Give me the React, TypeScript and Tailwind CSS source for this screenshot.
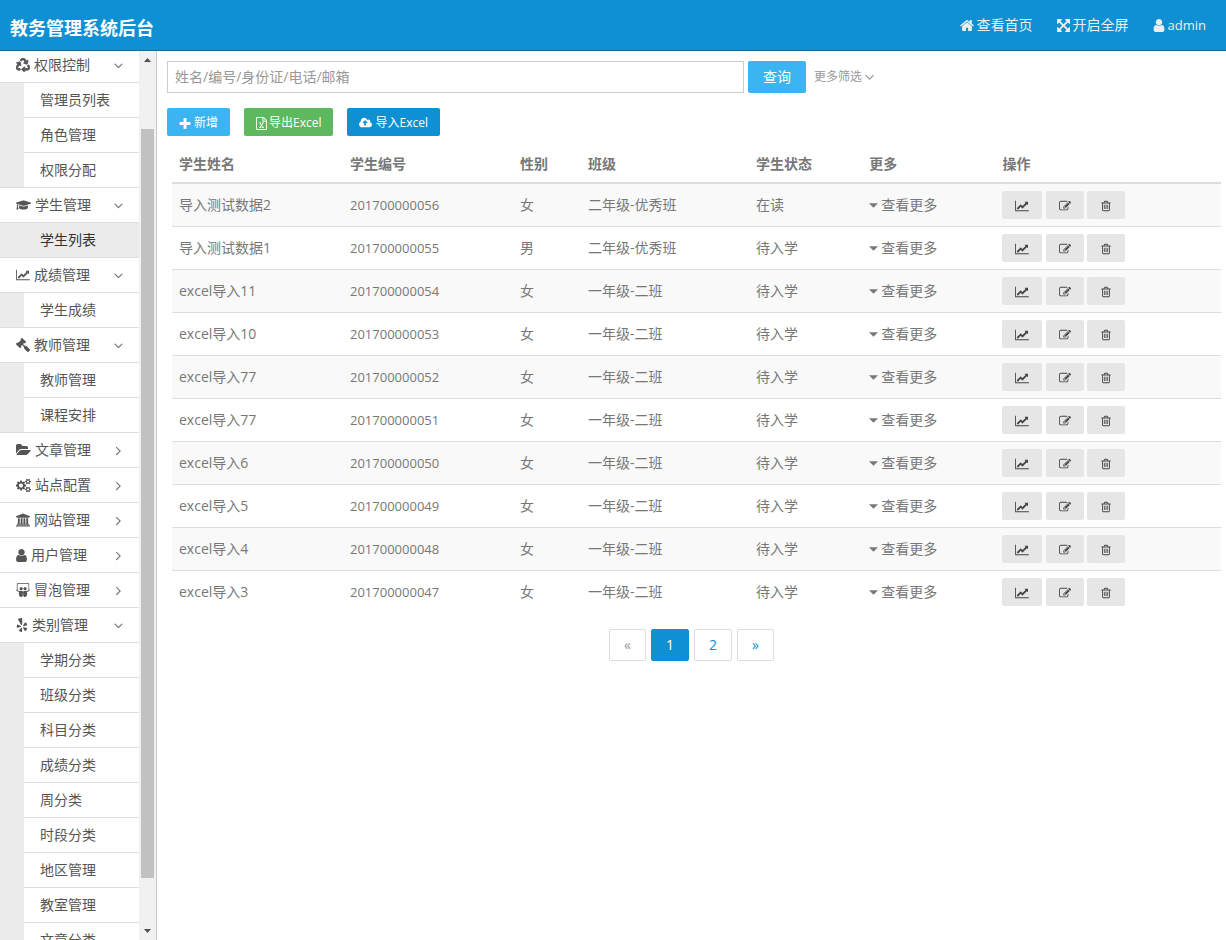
import { useState, type ReactNode } from "react";
import { FaGavel, FaGraduationCap, FaRecycle, FaSlideshare, FaYelp } from "react-icons/fa";

type GlyphProps = { box: string; className: string; d: string };

function Glyph({ box, className, d }: GlyphProps) {
  return (
    <svg viewBox={box} className={`shrink-0 fill-current ${className}`} aria-hidden="true">
      <path d={d} />
    </svg>
  );
}

const CHART =
  "M2048 1536v128h-2048v-1536h128v1408h1920zM1920 288v435q0 21-19.5 29.5t-35.5-7.5l-121-121-633 633q-10 10-23 10t-23-10l-233-233-416 416-192-192 585-585q10-10 23-10t23 10l233 233 464-464-121-121q-16-16-7.5-35.5t29.5-19.5h435q14 0 23 9t9 23z";
const EDIT =
  "M888 1184l116-116-152-152-116 116v56h96v96h56zm440-720q-16-16-33 1l-350 350q-17 17-1 33t33-1l350-350q17-17 1-33zm80 594v190q0 119-84.5 203.5t-203.5 84.5h-832q-119 0-203.5-84.5t-84.5-203.5v-832q0-119 84.5-203.5t203.5-84.5h832q63 0 117 25 15 7 18 23 3 17-9 29l-49 49q-14 14-32 8-23-6-45-6h-832q-66 0-113 47t-47 113v832q0 66 47 113t113 47h832q66 0 113-47t47-113v-126q0-13 9-22l64-64q15-15 35-7t20 29zm-96-738l288 288-672 672h-288v-288zm444 132l-92 92-288-288 92-92q28-28 68-28t68 28l152 152q28 28 28 68t-28 68z";
const TRASH =
  "M704 736v576q0 14-9 23t-23 9h-64q-14 0-23-9t-9-23v-576q0-14 9-23t23-9h64q14 0 23 9t9 23zm256 0v576q0 14-9 23t-23 9h-64q-14 0-23-9t-9-23v-576q0-14 9-23t23-9h64q14 0 23 9t9 23zm256 0v576q0 14-9 23t-23 9h-64q-14 0-23-9t-9-23v-576q0-14 9-23t23-9h64q14 0 23 9t9 23zm128 724v-948h-896v948q0 22 7 40.5t14.5 27 10.5 8.5h832q3 0 10.5-8.5t14.5-27 7-40.5zm-672-1076h448l-48-117q-7-9-17-11h-317q-10 2-17 11zm928 32v64q0 14-9 23t-23 9h-96v948q0 83-47 143.5t-113 60.5h-832q-66 0-113-58.5t-47-141.5v-952h-96q-14 0-23-9t-9-23v-64q0-14 9-23t23-9h309l70-167q15-37 54-63t79-26h320q40 0 79 26t54 63l70 167h309q14 0 23 9t9 23z";
const HOME =
  "M1472 992v480q0 26-19 45t-45 19h-384v-384h-256v384h-384q-26 0-45-19t-19-45v-480q0-1 .5-3t.5-3l575-474 575 474q1 2 1 6zm223-69l-62 74q-8 9-21 11h-3q-13 0-21-7l-692-577-692 577q-12 8-24 7-13-2-21-11l-62-74q-8-10-7-23.5t11-21.5l719-599q32-26 76-26t76 26l244 204v-195q0-14 9-23t23-9h192q14 0 23 9t9 23v408l219 182q10 8 11 21.5t-7 23.5z";
const ARROWS =
  "M1411 541l-355 355 355 355 144-144q29-31 70-14 39 17 39 59v448q0 26-19 45t-45 19h-448q-42 0-59-40-17-39 14-69l144-144-355-355-355 355 144 144q31 30 14 69-17 40-59 40h-448q-26 0-45-19t-19-45v-448q0-42 40-59 39-17 69 14l144 144 355-355-355-355-144 144q-19 19-45 19-12 0-24-5-40-17-40-59v-448q0-26 19-45t45-19h448q42 0 59 40 17 39-14 69l-144 144 355 355 355-355-144-144q-31-30-14-69 17-40 59-40h448q26 0 45 19t19 45v448q0 42-39 59-13 5-25 5-26 0-45-19z";
const USER =
  "M1536 1399q0 109-62.5 187t-150.5 78h-854q-88 0-150.5-78t-62.5-187q0-85 8.5-160.5t31.5-152 58.5-131 94-89 134.5-34.5q131 128 313 128t313-128q76 0 134.5 34.5t94 89 58.5 131 31.5 152 8.5 160.5zm-256-887q0 159-112.5 271.5t-271.5 112.5-271.5-112.5-112.5-271.5 112.5-271.5 271.5-112.5 271.5 112.5 112.5 271.5z";
const PLUS =
  "M1600 736v192q0 40-28 68t-68 28h-416v416q0 40-28 68t-68 28h-192q-40 0-68-28t-28-68v-416h-416q-40 0-68-28t-28-68v-192q0-40 28-68t68-28h416v-416q0-40 28-68t68-28h192q40 0 68 28t28 68v416h416q40 0 68 28t28 68z";
const FOLDER =
  "M1879 952q0 31-31 66l-336 396q-43 51-120.5 86.5t-143.5 35.5h-1088q-34 0-60.5-13t-26.5-43q0-31 31-66l336-396q43-51 120.5-86.5t143.5-35.5h1088q34 0 60.5 13t26.5 43zm-343-344v160h-832q-94 0-197 47.5t-164 119.5l-337 396-5 6q0-4-.5-12.5t-.5-12.5v-960q0-92 66-158t158-66h320q92 0 158 66t66 158v32h544q92 0 158 66t66 158z";
const BANK =
  "M960 0l960 384v128h-128q0 26-20.5 45t-48.5 19h-1526q-28 0-48.5-19t-20.5-45h-128v-128zm-704 640h256v768h128v-768h256v768h128v-768h256v768h128v-768h256v768h59q28 0 48.5 19t20.5 45v64h-1664v-64q0-26 20.5-45t48.5-19h59v-768zm1595 960q28 0 48.5 19t20.5 45v128h-1920v-128q0-26 20.5-45t48.5-19h1782z";
const UPLOAD =
  "M1280 864q0-14-9-23l-352-352q-9-9-23-9t-23 9l-351 351q-10 12-10 24 0 14 9 23t23 9h224v352q0 13 9.5 22.5t22.5 9.5h192q13 0 22.5-9.5t9.5-22.5v-352h224q13 0 22.5-9.5t9.5-22.5zm640 288q0 159-112.5 271.5t-271.5 112.5h-1088q-185 0-316.5-131.5t-131.5-316.5q0-130 70-240t188-165q-2-30-2-43 0-212 150-362t362-150q156 0 285.5 87t188.5 231q71-62 166-62 106 0 181 75t75 181q0 76-41 138 130 31 213.5 135.5t83.5 238.5z";
const EXCEL =
  "M1596 380q28 28 48 76t20 88v1152q0 40-28 68t-68 28h-1344q-40 0-68-28t-28-68v-1600q0-40 28-68t68-28h896q40 0 88 20t76 48zm-444-244v376h376q-10-29-22-41l-313-313q-12-12-41-22zm384 1528v-1024h-416q-40 0-68-28t-28-68v-416h-768v1536h1280zm-979-234v106h281v-106h-75l103-161q5-7 10-16.5t7.5-13.5 3.5-4h2q1 4 5 10 2 4 4.5 7.5t6 8 6.5 8.5l107 161h-76v106h291v-106h-68l-192-273 195-282h67v-107h-279v107h74l-103 159q-4 7-10 16.5t-9 13.5l-2 3h-2q-1-4-5-10-6-11-17-23l-106-159h76v-107h-290v107h68l189 272-194 283h-68z";
const SMALL_COG =
  "q0 16-149 31-12 27-30 52 51 113 51 138 0 4-4 7-122 71-124 71-8 0-46-47t-52-68q-20 2-30 2t-30-2q-14 21-52 68t-46 47q-2 0-124-71-4-3-4-7 0-25 51-138-18-25-30-52-149-15-149-31v-140q0-16 149-31 13-29 30-52-51-113-51-138 0-4 4-7 4-2 35-20t59-34 30-16q8 0 46 46.5t52 67.5q20-2 30-2t30 2q51-71 92-112l6-2q4 0 124 70 4 3 4 7 0 25-51 138 17 23 30 52 149 15 149 31z";
const COGS =
  "M896 960q0-106-75-181t-181-75-181 75-75 181 75 181 181 75 181-75 75-181zm768 512q0-52-38-90t-90-38-90 38-38 90q0 53 37.5 90.5t90.5 37.5 90.5-37.5 37.5-90.5zm0-1024q0-52-38-90t-90-38-90 38-38 90q0 53 37.5 90.5t90.5 37.5 90.5-37.5 37.5-90.5zm-384 421v185q0 10-7 19.5t-16 10.5l-155 24q-11 35-32 76 34 48 90 115 7 11 7 20 0 12-7 19-23 30-82.5 89.5t-78.5 59.5q-11 0-21-7l-115-90q-37 19-77 31-11 108-23 155-7 24-30 24h-186q-11 0-20-7.5t-10-17.5l-23-153q-34-10-75-31l-118 89q-7 7-20 7-11 0-21-8-144-133-144-160 0-9 7-19 10-14 41-53t47-61q-23-44-35-82l-152-24q-10-1-17-9.5t-7-19.5v-185q0-10 7-19.5t16-10.5l155-24q11-35 32-76-34-48-90-115-7-11-7-20 0-12 7-20 22-30 82-89t79-59q11 0 21 7l115 90q34-18 77-32 11-108 23-154 7-24 30-24h186q11 0 20 7.5t10 17.5l23 153q34 10 75 31l118-89q8-7 20-7 11 0 21 8 144 133 144 160 0 8-7 19-12 16-42 54t-45 60q23 48 34 82l152 23q10 2 17 10.5t7 19.5z" +
  "M1920 1402v140" + SMALL_COG + "M1920 378v140" + SMALL_COG;
const ANGLE_DOWN =
  "M1395 736q0 13-10 23l-466 466q-10 10-23 10t-23-10l-466-466q-10-10-10-23t10-23l50-50q10-10 23-10t23 10l393 393 393-393q10-10 23-10t23 10l50 50q10 10 10 23z";
const ANGLE_RIGHT =
  "M1171 960q0 13-10 23l-466 466q-10 10-23 10t-23-10l-50-50q-10-10-10-23t10-23l393-393-393-393q-10-10-10-23t10-23l50-50q10-10 23-10t23 10l466 466q10 10 10 23z";

type Group = { name: string; icon: ReactNode; open: boolean; items: string[]; active?: string };

const groups: Group[] = [
  { name: "权限控制", icon: <FaRecycle className="h-3.5 w-3.5 stroke-current [stroke-width:28px]" />, open: true, items: ["管理员列表", "角色管理", "权限分配"] },
  { name: "学生管理", icon: <FaGraduationCap className="h-4 w-[15px]" />, open: true, items: ["学生列表"], active: "学生列表" },
  { name: "成绩管理", icon: <Glyph box="0 0 2048 1792" className="h-3 w-3.5" d={CHART} />, open: true, items: ["学生成绩"] },
  { name: "教师管理", icon: <FaGavel className="h-3.5 w-3.5 -scale-x-100" />, open: true, items: ["教师管理", "课程安排"] },
  { name: "文章管理", icon: <Glyph box="0 0 1920 1792" className="h-3.5 w-[15px]" d={FOLDER} />, open: false, items: [] },
  { name: "站点配置", icon: <Glyph box="0 0 1920 1792" className="h-3.5 w-[15px]" d={COGS} />, open: false, items: [] },
  { name: "网站管理", icon: <Glyph box="0 0 1920 1792" className="h-3.5 w-3.5" d={BANK} />, open: false, items: [] },
  { name: "用户管理", icon: <Glyph box="256 128 1280 1536" className="h-[13px] w-[11px]" d={USER} />, open: false, items: [] },
  { name: "冒泡管理", icon: <FaSlideshare className="h-3.5 w-3.5" />, open: false, items: [] },
  {
    name: "类别管理",
    icon: <FaYelp className="h-3.5 w-3" />,
    open: true,
    items: ["学期分类", "班级分类", "科目分类", "成绩分类", "周分类", "时段分类", "地区管理", "教室管理", "文章分类"],
  },
];

function MenuGroup({ group }: { group: Group }) {
  const [open, setOpen] = useState(group.open);
  return (
    <li>
      <button
        type="button"
        aria-expanded={open}
        onClick={() => setOpen(!open)}
        className="flex h-[35px] w-full items-center gap-1 border-b border-[#dedede] bg-white pr-[13px] pl-4 text-left"
      >
        {group.icon}
        <span className="grow">{group.name}</span>
        <Glyph box="0 0 1792 1792" className="h-[15px] w-[15px] text-[#777]" d={open ? ANGLE_DOWN : ANGLE_RIGHT} />
      </button>
      {open && group.items.length > 0 && (
        <ul className="border-b border-[#dedede] bg-[#ebebeb] pl-6">
          {group.items.map((item) => (
            <li key={item} className="border-b border-[#dedede] last:border-b-0">
              <a
                href="#"
                className={
                  item === group.active
                    ? "block h-[34px] pl-4 leading-[34px] text-[#333]"
                    : "block h-[34px] bg-white pl-4 leading-[34px]"
                }
              >
                {item}
              </a>
            </li>
          ))}
        </ul>
      )}
    </li>
  );
}

const rows = [
  ["导入测试数据2", "201700000056", "女", "二年级-优秀班", "在读"],
  ["导入测试数据1", "201700000055", "男", "二年级-优秀班", "待入学"],
  ["excel导入11", "201700000054", "女", "一年级-二班", "待入学"],
  ["excel导入10", "201700000053", "女", "一年级-二班", "待入学"],
  ["excel导入77", "201700000052", "女", "一年级-二班", "待入学"],
  ["excel导入77", "201700000051", "女", "一年级-二班", "待入学"],
  ["excel导入6", "201700000050", "女", "一年级-二班", "待入学"],
  ["excel导入5", "201700000049", "女", "一年级-二班", "待入学"],
  ["excel导入4", "201700000048", "女", "一年级-二班", "待入学"],
  ["excel导入3", "201700000047", "女", "一年级-二班", "待入学"],
];

const columns = [
  ["学生姓名", "w-[16.3%]"],
  ["学生编号", "w-[16.2%]"],
  ["性别", "w-[6.5%]"],
  ["班级", "w-[16%]"],
  ["学生状态", "w-[10.8%]"],
  ["更多", "w-[12.7%]"],
  ["操作", "w-[21.5%]"],
];

export default function App() {
  return (
    <div className="flex h-screen flex-col bg-white font-['Open_Sans','Noto_Sans_CJK_SC',sans-serif] text-sm text-[#777]">
      <header className="flex h-[51px] shrink-0 items-center justify-between border-b border-[#0c6da0] bg-[#0e90d2] pr-5 pl-2.5 text-[#eee]">
        <h1 className="pt-1.5 text-lg font-bold text-white">教务管理系统后台</h1>
        <nav className="flex gap-6">
          <a href="#" className="flex items-center gap-[3px]">
            <Glyph box="64 128 1664 1536" className="h-[13px] w-3.5" d={HOME} />
            查看首页
          </a>
          <a href="#" className="flex items-center gap-[3px]">
            <Glyph box="128 128 1536 1536" className="h-[13px] w-[13px]" d={ARROWS} />
            开启全屏
          </a>
          <a href="#" className="flex items-center gap-[3px] text-[13px]">
            <Glyph box="256 128 1280 1536" className="h-[13px] w-3" d={USER} />
            admin
          </a>
        </nav>
      </header>

      <div className="flex min-h-0 grow">
        <aside className="flex w-[157px] shrink-0 overflow-hidden border-r border-[#c8c8c8] text-[#555]">
          <ul className="-mt-[3px] grow">
            {groups.map((group) => (
              <MenuGroup key={group.name} group={group} />
            ))}
          </ul>
          <div className="flex w-[17px] shrink-0 flex-col items-center bg-[#f1f1f1] text-[#505050]" aria-hidden="true">
            <svg viewBox="0 0 17 17" className="h-[17px] w-[17px] fill-current">
              <path d="M5 11h7L8.500 7z" />
            </svg>
            <div className="flex w-[13px] grow flex-col pt-[61px] pb-[45px]">
              <div className="grow bg-[#c1c1c1]" />
            </div>
            <svg viewBox="0 0 17 17" className="h-[17px] w-[17px] fill-current">
              <path d="M5 6h7L8.500 10z" />
            </svg>
          </div>
        </aside>

        <main className="min-w-0 grow overflow-hidden p-2.5">
          <form className="flex items-center gap-1" onSubmit={(event) => event.preventDefault()}>
            <input
              type="search"
              aria-label="搜索学生"
              placeholder="姓名/编号/身份证/电话/邮箱"
              className="h-8 w-[55%] border border-[#ccc] px-[7px] pb-0.5 placeholder:text-[#999] focus:outline-none"
            />
            <button type="submit" className="h-8 rounded-xs bg-[#3bb4f2] px-[15px] text-white">
              查询
            </button>
            <button type="button" className="ml-1 flex items-center gap-[3px] text-xs text-[#999]">
              更多筛选
              <Glyph box="380 448 1032 1032" className="h-[9px] w-[9px]" d={ANGLE_DOWN} />
            </button>
          </form>

          <div className="mt-[15px] flex gap-3.5 text-xs text-white">
            <button type="button" className="flex h-7 items-center gap-[3px] rounded-xs bg-[#3bb4f2] px-3 pt-0.5">
              <Glyph box="192 128 1408 1408" className="h-[11px] w-3" d={PLUS} />
              新增
            </button>
            <button type="button" className="flex h-7 items-center gap-0.5 rounded-xs bg-[#5eb95e] px-3 pt-0.5">
              <Glyph box="128 0 1536 1792" className="h-[13px] w-[11px]" d={EXCEL} />
              导出Excel
            </button>
            <button type="button" className="flex h-7 items-center gap-[3px] rounded-xs bg-[#0e90d2] px-3 pt-0.5">
              <Glyph box="0 0 1920 1792" className="h-3 w-[13px]" d={UPLOAD} />
              导入Excel
            </button>
          </div>

          <div className="mt-2.5 -mr-[5px] ml-[5px]">
            <table className="w-full table-fixed border-separate border-spacing-0 text-left">
              <thead>
                <tr>
                  {columns.map(([name, width]) => (
                    <th key={name} scope="col" className={`h-[38px] border-b-2 border-[#ddd] px-[7px] font-bold ${width}`}>
                      {name}
                    </th>
                  ))}
                </tr>
              </thead>
              <tbody className="[&>tr:last-child>td]:border-transparent [&>tr:nth-child(odd)]:bg-[#f9f9f9] [&>tr:last-child]:bg-white [&>tr>td]:h-[43px] [&>tr>td]:border-b [&>tr>td]:border-[#ddd] [&>tr>td]:px-[7px]">
                {rows.map(([name, code, gender, grade, status]) => (
                  <tr key={code}>
                    <td>{name}</td>
                    <td className="text-[13px]">{code}</td>
                    <td>{gender}</td>
                    <td>{grade}</td>
                    <td>{status}</td>
                    <td>
                      <button type="button" className="flex items-center gap-[3px]">
                        <svg viewBox="0 0 8 4" className="h-[5px] w-[9px] fill-current" aria-hidden="true">
                          <path d="M0 0h8L4 4z" />
                        </svg>
                        查看更多
                      </button>
                    </td>
                    <td>
                      <div className="flex gap-[3px] text-[#444]">
                        <button type="button" aria-label="成绩" className="mr-px flex h-7 w-10 items-center justify-center rounded-xs bg-[#e6e6e6] pt-0.5">
                          <Glyph box="0 0 2048 1792" className="h-3 w-3.5" d={CHART} />
                        </button>
                        <button type="button" aria-label="编辑" className="flex h-7 w-[38px] items-center justify-center rounded-xs bg-[#e6e6e6] pt-0.5">
                          <Glyph box="0 0 1792 1792" className="h-3 w-3" d={EDIT} />
                        </button>
                        <button type="button" aria-label="删除" className="flex h-7 w-[38px] items-center justify-center rounded-xs bg-[#e6e6e6] pt-0.5">
                          <Glyph box="192 0 1408 1792" className="h-3 w-2.5" d={TRASH} />
                        </button>
                      </div>
                    </td>
                  </tr>
                ))}
              </tbody>
            </table>
          </div>

          <nav aria-label="分页" className="mt-[15px] flex justify-center gap-[5px] text-[#0e90d2] [&>a]:flex [&>a]:h-8 [&>a]:items-center [&>a]:justify-center [&>a]:rounded-xs [&>a]:border">
            <a href="#" className="w-[37px] border-[#ddd] text-[#999]">«</a>
            <a href="#" aria-current="page" className="w-[38px] border-[#0e90d2] bg-[#0e90d2] text-white">1</a>
            <a href="#" className="w-[38px] border-[#ddd]">2</a>
            <a href="#" className="w-[37px] border-[#ddd]">»</a>
          </nav>
        </main>
      </div>
    </div>
  );
}
